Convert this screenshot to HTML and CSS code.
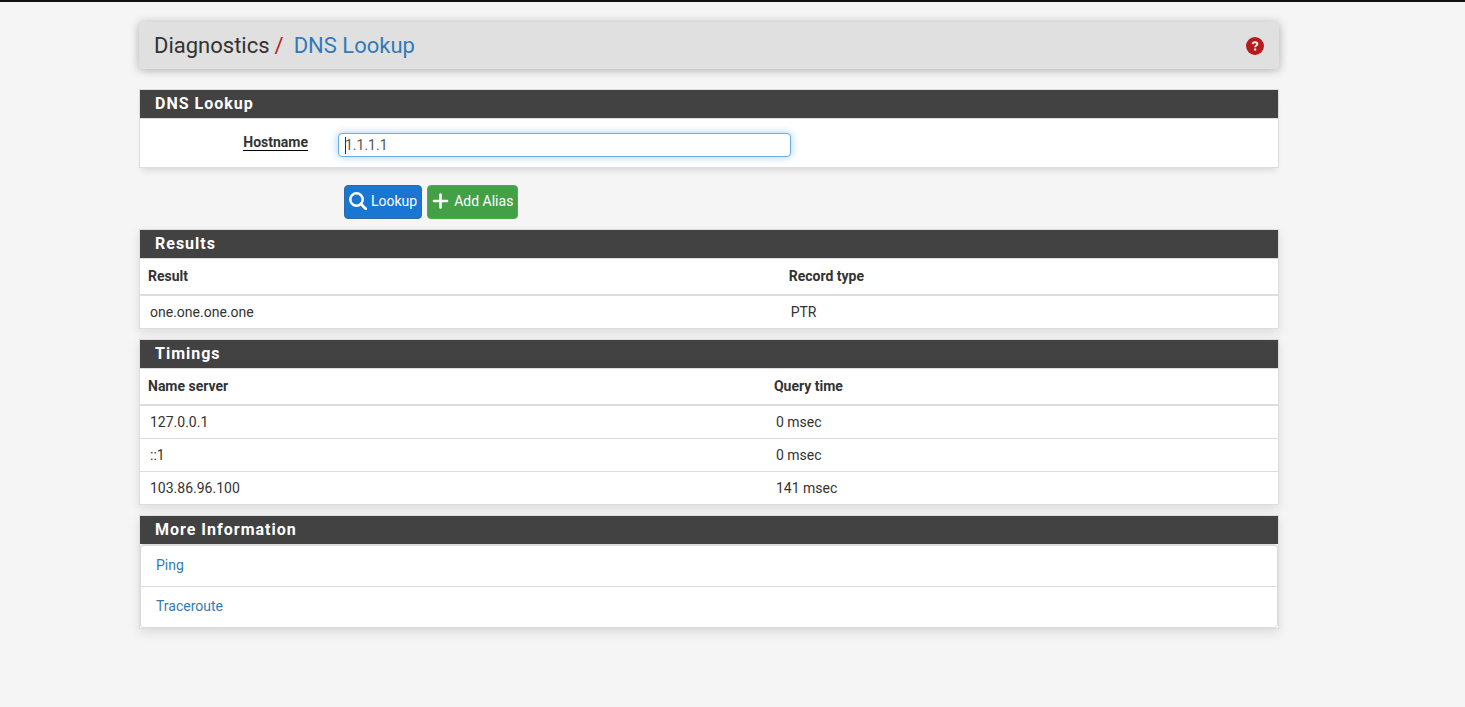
FILE: index.html
```html
<!DOCTYPE html>
<html lang="en">
<head>
    <meta charset="UTF-8">
    <meta name="viewport" content="width=device-width, initial-scale=1.0">
    <title>Diagnostics: DNS Lookup</title>
    <link rel="stylesheet" href="styles.css">
</head>
<body>
    <div class="container">
        <header class="header">
            <h1 class="breadcrumb">Diagnostics<span class="slash">/</span><a href="#">DNS Lookup</a></h1>
            <a class="help" href="#" aria-label="Help">
                <svg viewBox="0 0 18 18" width="18" height="18">
                    <circle cx="9" cy="9" r="9" fill="#b71c1c"/>
                    <path d="M6.6 7.2C6.8 5.7 7.8 5.2 9 5.2c1.4 0 2.4.8 2.4 1.9C11.4 8.6 9.1 8.6 9.1 10.3" fill="none" stroke="#eee" stroke-width="1.9"/>
                    <rect x="8" y="11.5" width="2.2" height="2" fill="#eee"/>
                </svg>
            </a>
        </header>

        <form>
            <section class="panel panel-form">
                <h2 class="panel-heading">DNS Lookup</h2>
                <div class="form-group">
                    <label for="host"><span class="required">Hostname</span></label>
                    <div class="input-wrap">
                        <input type="text" id="host" class="form-control" value="1.1.1.1">
                    </div>
                </div>
            </section>
            <div class="buttons">
                <button type="submit" class="btn btn-primary">
                    <svg viewBox="0 0 18 18" width="18" height="18">
                        <circle cx="7.5" cy="7.5" r="6.2" fill="none" stroke="#fff" stroke-width="2.5"/>
                        <path d="M12 12l4.700 4.700" stroke="#fff" stroke-width="2.8" stroke-linecap="round"/>
                    </svg>
                    Lookup
                </button>
                <button type="button" class="btn btn-success">
                    <svg viewBox="0 0 18 18" width="18" height="18">
                        <path d="M8.500 2.500v13M2 9h13" stroke="#fff" stroke-width="2.6" stroke-linecap="round"/>
                    </svg>
                    Add Alias
                </button>
            </div>
        </form>

        <section class="panel">
            <h2 class="panel-heading">Results</h2>
            <table class="table table-results">
                <thead>
                    <tr>
                        <th>Result</th>
                        <th>Record type</th>
                    </tr>
                </thead>
                <tbody>
                    <tr>
                        <td>one.one.one.one</td>
                        <td>PTR</td>
                    </tr>
                </tbody>
            </table>
        </section>

        <section class="panel">
            <h2 class="panel-heading">Timings</h2>
            <table class="table table-timings">
                <thead>
                    <tr>
                        <th>Name server</th>
                        <th>Query time</th>
                    </tr>
                </thead>
                <tbody>
                    <tr>
                        <td>127.0.0.1</td>
                        <td>0 msec</td>
                    </tr>
                    <tr>
                        <td>::1</td>
                        <td>0 msec</td>
                    </tr>
                    <tr>
                        <td>103.86.96.100</td>
                        <td>141 msec</td>
                    </tr>
                </tbody>
            </table>
        </section>

        <section class="panel">
            <h2 class="panel-heading">More Information</h2>
            <ul class="list-group">
                <li><a href="#">Ping</a></li>
                <li><a href="#">Traceroute</a></li>
            </ul>
        </section>
    </div>
</body>
</html>
```
FILE: styles.css
```css
* {
    box-sizing: border-box;
}
body {
    margin: 0;
    padding: 20px 47px 20px 0;
    border-top: 2px solid #111;
    background-color: #f5f5f5;
    color: #333;
    font-family: Roboto, sans-serif;
    font-size: 14px;
    line-height: 20px;
}
a {
    color: #337ab7;
    text-decoration: none;
}
.container {
    max-width: 1140px;
    margin: 0 auto;
}
.header {
    display: flex;
    align-items: center;
    justify-content: space-between;
    padding: 10px 15px;
    margin-bottom: 20px;
    background-color: #e0e0e0;
    border-radius: 4px;
    box-shadow: 0 1px 10px rgba(0, 0, 0, 0.3);
}
.breadcrumb {
    margin: 0;
    font-size: 22px;
    font-weight: 400;
    line-height: 27px;
}
.slash {
    padding: 0 10px 0 5px;
    color: #b71c1c;
}
.help svg {
    display: block;
}
.panel {
    margin-bottom: 10px;
    background-color: #fff;
    border: 1px solid #ddd;
    box-shadow: 0 4px 10px rgba(0, 0, 0, 0.1);
}
.panel-form {
    margin-bottom: 17px;
    box-shadow: 0 6px 6px -3px rgba(0, 0, 0, 0.1);
}
.panel-heading {
    margin: 0;
    padding: 4px 15px;
    background-color: #424242;
    color: #fff;
    font-size: 16px;
    font-weight: 700;
    line-height: 20px;
    letter-spacing: 1px;
}
.form-group {
    display: grid;
    grid-template-columns: 168px minmax(0, 453px);
    gap: 30px;
    padding: 14px 0 10px;
    border-top: 1px solid #ddd;
}
.form-group label {
    font-weight: 700;
    line-height: 18px;
    text-align: right;
}
.required {
    border-bottom: 1px solid #000;
}
.input-wrap {
    position: relative;
}
/* text cursor */
.input-wrap::before {
    content: "";
    position: absolute;
    top: 4px;
    left: 7px;
    width: 1px;
    height: 17px;
    background-color: #333;
}
.form-control {
    display: block;
    width: 100%;
    height: 24px;
    padding: 0 6px;
    border: 1px solid #66afe9;
    border-radius: 4px;
    box-shadow: 0 0 8px rgba(102, 175, 233, 0.6);
    color: #555;
    font: inherit;
    outline: none;
}
.buttons {
    display: flex;
    gap: 5px;
    padding-left: 205px;
    margin-bottom: 10px;
}
.btn {
    display: flex;
    align-items: center;
    gap: 4px;
    height: 34px;
    padding: 0 4px 2px;
    border: 1px solid;
    border-radius: 4px;
    color: #fff;
    font: inherit;
}
.btn-primary {
    background-color: #1976d2;
    border-color: #2e6da4;
}
.btn-success {
    background-color: #43a047;
    border-color: #4cae4c;
}
.table {
    width: 100%;
    border-collapse: collapse;
    border-top: 1px solid #ddd;
}
.table th {
    padding: 7px 8px 8px;
    border-bottom: 2px solid #ddd;
    text-align: left;
}
.table td {
    padding: 6px 10px;
    border-top: 1px solid #ddd;
}
.table-results th:first-child {
    width: 56.3%;
}
.table-timings th:first-child {
    width: 55%;
}
.list-group {
    margin: 0;
    padding: 0;
    list-style: none;
    border: 1px solid #ddd;
    border-top-width: 2px;
    border-radius: 4px;
}
.list-group li {
    padding: 9px 15px 11px;
}
.list-group li + li {
    border-top: 1px solid #ddd;
}
```
